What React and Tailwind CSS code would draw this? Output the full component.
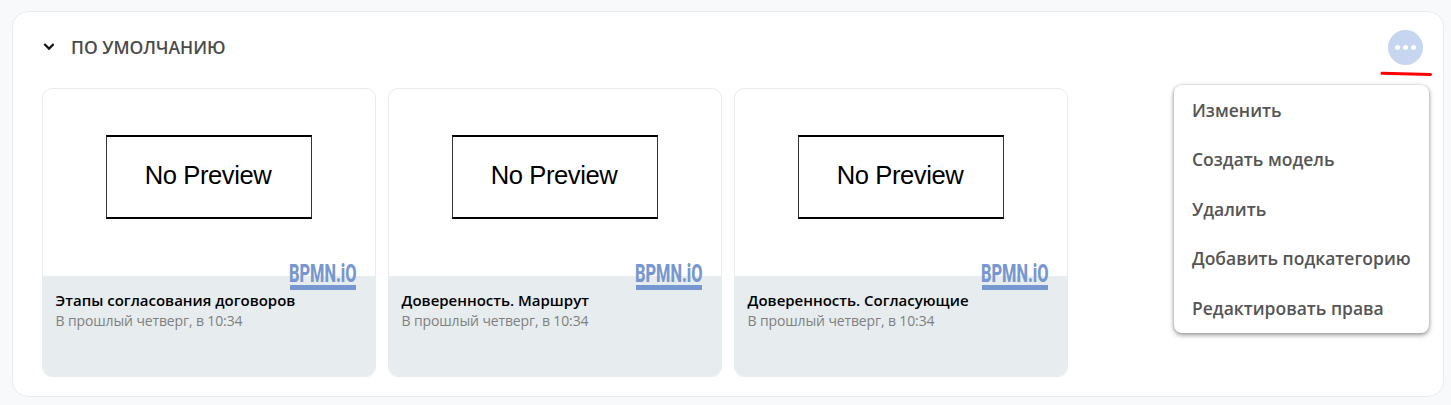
import React from "react";

const models = [
  "Этапы согласования договоров",
  "Доверенность. Маршрут",
  "Доверенность. Согласующие",
];

const actions = [
  "Изменить",
  "Создать модель",
  "Удалить",
  "Добавить подкатегорию",
  "Редактировать права",
];

function BpmnLogo() {
  return (
    <div className="absolute top-[175px] left-[247px] h-[26px] w-[66px] border-b-5 border-[#7697d0]">
      <span className="-ml-px block w-[107px] origin-top-left scale-x-[0.617] font-[Roboto,sans-serif] text-[26.5px] leading-[18px] font-extrabold whitespace-nowrap text-[#7697d0]">
        BPMN.iO
      </span>
    </div>
  );
}

function ModelCard({ title }) {
  return (
    <article className="relative flex h-[289px] w-[334px] flex-col overflow-hidden rounded-[10px] border border-[#e7ecee] bg-white">
      <div className="flex h-[187px] shrink-0 justify-center pt-[46px]">
        <div className="mr-px flex h-[84px] w-[206px] items-center justify-center border-x border-y-2 border-x-[#333] border-y-black pr-[1px] pb-[3px] font-['Liberation_Sans',sans-serif] text-[25.6px] leading-none tracking-[-0.42px] text-black">
          No Preview
        </div>
      </div>
      <div className="flex-1 bg-[#e7ecee] px-[12.6px] pt-[14px] font-['Open_Sans',sans-serif]">
        <h3 className="text-[15px] leading-[20px] font-semibold whitespace-nowrap text-black">{title}</h3>
        <p className="text-sm leading-[22px] font-normal tracking-[-0.13px] whitespace-nowrap text-[#808080]">В прошлый четверг, в 10:34</p>
      </div>
      <BpmnLogo />
    </article>
  );
}

export default function App() {
  return (
    <div className="h-[405px] bg-[#f8f9fb] pt-[11px] pr-[7px] pl-3 font-['Open_Sans',sans-serif]">
      <section className="relative h-[386px] rounded-2xl border border-[#e7ecee] bg-white px-[29px]">
        <header className="flex h-[76px] items-start justify-between pt-[18px]">
          <div className="flex h-[35px] items-center">
            <svg width="12" height="8" viewBox="0 0 12 8" className="-mt-[2px] mr-[17px]" fill="none" stroke="#111" strokeWidth="2.2">
              <path d="M2.3 1 L7 5.6 L11.7 1" />
            </svg>
            <h2 className="-mt-px text-[17.5px] font-semibold text-[#4a4a4a]">ПО УМОЛЧАНИЮ</h2>
          </div>
          <button className="-mr-[9px] flex size-[35px] items-center justify-center gap-[3px] rounded-full bg-[#c6d5f0]">
            <span className="size-[5px] rounded-full bg-white" />
            <span className="size-[5px] rounded-full bg-white" />
            <span className="size-[5px] rounded-full bg-white" />
          </button>
        </header>
        <div className="flex gap-3">
          {models.map((title) => (
            <ModelCard key={title} title={title} />
          ))}
        </div>
        <svg className="absolute top-[59px] left-[1366px]" width="54" height="6" viewBox="0 0 54 6">
          <path d="M3 2.3 L51.5 3.5" stroke="#ff0000" strokeWidth="3" strokeLinecap="round" />
        </svg>
        <ul className="absolute top-[73px] left-[1161px] flex h-[248px] w-[255px] flex-col rounded-lg bg-white pl-[18px] shadow-[0_2px_5px_rgba(0,0,0,0.42),0_0_3px_rgba(0,0,0,0.12)]">
          {actions.map((action) => (
            <li key={action} className="flex h-[49.5px] items-center text-[17.5px] font-semibold whitespace-nowrap text-[#555]">
              {action}
            </li>
          ))}
        </ul>
      </section>
    </div>
  );
}
